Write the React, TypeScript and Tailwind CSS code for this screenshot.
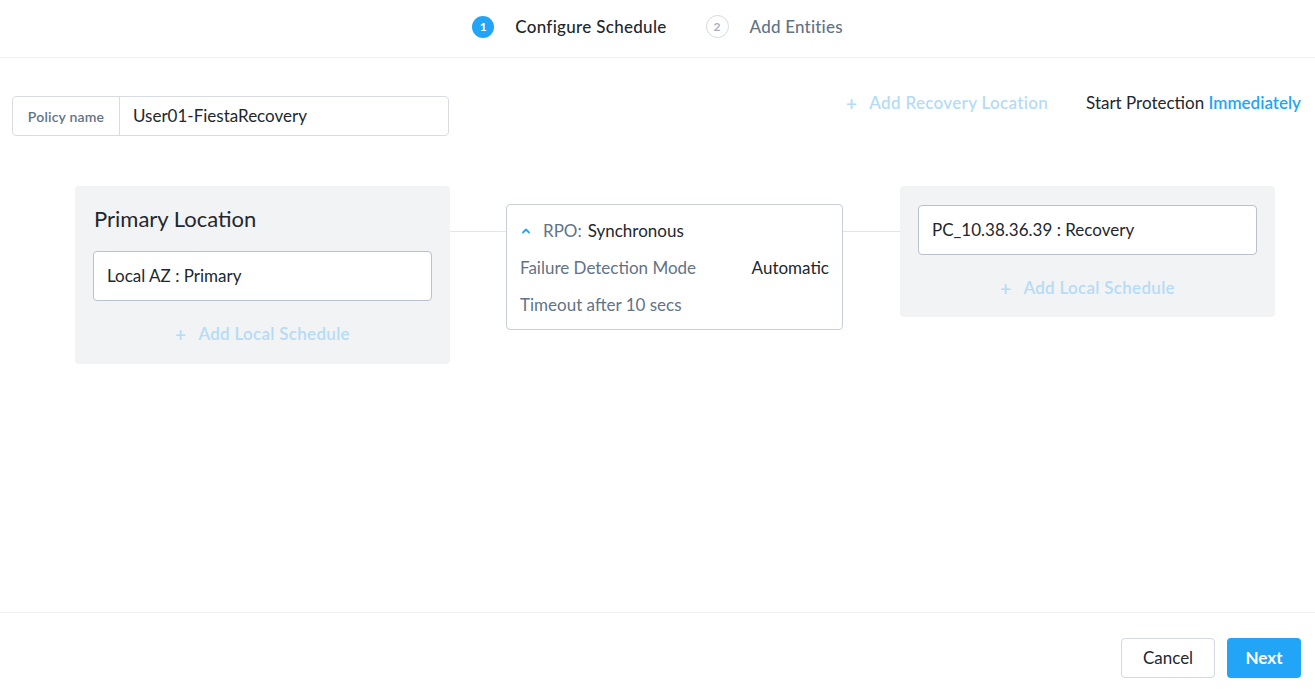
import React from 'react';

const font = { fontFamily: 'Lato, "Open Sans", sans-serif' };

const AddLink = ({ label }: { label: string }) => (
  <div className="flex h-[24px] items-center justify-center gap-[12px] text-[17px] font-semibold tracking-[0.3px] text-[#b5dcf6]">
    <span className="text-[19px] leading-none">+</span>
    <span>{label}</span>
  </div>
);

const Connector = ({ w }: { w: string }) => <div className={`mt-[45px] h-px shrink-0 bg-[#e1e4e9] ${w}`} />;

export default function App() {
  return (
    <div style={font} className="flex h-screen flex-col bg-white text-[#22272e]">
      {/* steps */}
      <div className="flex h-[58px] shrink-0 items-center justify-center gap-[39px] border-b border-[#eef0f3] pb-[4px]">
        <div className="flex items-center gap-[21px]">
          <span className="flex h-[22px] w-[22px] items-center justify-center rounded-full bg-[#22a5f7] text-[12px] font-bold text-white">1</span>
          <span className="text-[17px] font-medium tracking-[0.3px] text-[#22272e]">Configure Schedule</span>
        </div>
        <div className="flex items-center gap-[21px]">
          <span className="flex h-[23px] w-[23px] items-center justify-center rounded-full border border-[#d5dae1] text-[12px] font-bold text-[#a6b0bd]">2</span>
          <span className="text-[17px] font-medium tracking-[0.2px] text-[#627386]">Add Entities</span>
        </div>
      </div>

      <div className="flex-1">
        <div className="flex items-start justify-between pl-[12px] pr-[14px] pt-[33px]">
          <div className="mt-[5px] flex h-[40px] w-[437px] items-stretch rounded-[4px] border border-[#d9dde3]">
            <div className="flex w-[107px] items-center justify-center border-r border-[#d9dde3] text-[14px] font-semibold tracking-[0.2px] text-[#627386]">
              Policy name
            </div>
            <div className="flex items-center pl-[13px] text-[17px] text-[#22272e]">User01-FiestaRecovery</div>
          </div>
          <div className="flex h-[24px] items-center gap-[38px]">
            <AddLink label="Add Recovery Location" />
            <div className="text-[17px]">
              Start Protection <span className="font-semibold text-[#22a5f7]">Immediately</span>
            </div>
          </div>
        </div>

        <div className="flex items-start pl-[75px] pt-[50px]">
          <div className="w-[375px] shrink-0 rounded-[4px] bg-[#f2f3f5] px-[18px] pb-[18px] pt-[19px]">
            <div className="pl-[1px] text-[22px] leading-[28px] text-[#22272e]">Primary Location</div>
            <div className="mt-[18px] flex h-[50px] items-center rounded-[4px] border border-[#b9c1cc] bg-white pl-[13px] text-[17px]">
              Local AZ : Primary
            </div>
            <div className="mt-[21px]">
              <AddLink label="Add Local Schedule" />
            </div>
          </div>

          <Connector w="w-[56px]" />

          <div className="mt-[18px] h-[126px] w-[337px] shrink-0 rounded-[4px] border border-[#c9cfd7] px-[13px] pt-[14px] text-[17px]">
            <div className="flex h-[24px] items-center">
              <svg width="10" height="10" viewBox="0 0 10 10" className="ml-[1px] mr-[12px]">
                <path d="M2 6.5 L5 3.5 L8 6.5" fill="none" stroke="#22a5f7" strokeWidth="1.8" strokeLinecap="round" strokeLinejoin="round" />
              </svg>
              <span className="text-[#627386]">RPO:</span>
              <span className="ml-[6px]">Synchronous</span>
            </div>
            <div className="mt-[13px] flex h-[24px] items-center justify-between text-[#627386]">
              <span>Failure Detection Mode</span>
              <span className="text-[#22272e]">Automatic</span>
            </div>
            <div className="mt-[13px] flex h-[24px] items-center text-[#627386]">Timeout after 10 secs</div>
          </div>

          <Connector w="w-[57px]" />

          <div className="w-[375px] shrink-0 rounded-[4px] bg-[#f2f3f5] px-[18px] pb-[17px] pt-[19px]">
            <div className="flex h-[50px] items-center rounded-[4px] border border-[#b9c1cc] bg-white pl-[13px] text-[17px]">
              PC_10.38.36.39 : Recovery
            </div>
            <div className="mt-[21px]">
              <AddLink label="Add Local Schedule" />
            </div>
          </div>
        </div>
      </div>

      <div className="flex h-[77px] shrink-0 items-start justify-end gap-[12px] border-t border-[#eef0f3] pr-[14px] pt-[25px]">
        <button className="h-[40px] w-[94px] rounded-[4px] border border-[#d5dae1] bg-white text-[17px] text-[#22272e]">Cancel</button>
        <button className="h-[40px] w-[74px] rounded-[4px] bg-[#22a5f7] text-[17px] font-bold text-white">Next</button>
      </div>
    </div>
  );
}
